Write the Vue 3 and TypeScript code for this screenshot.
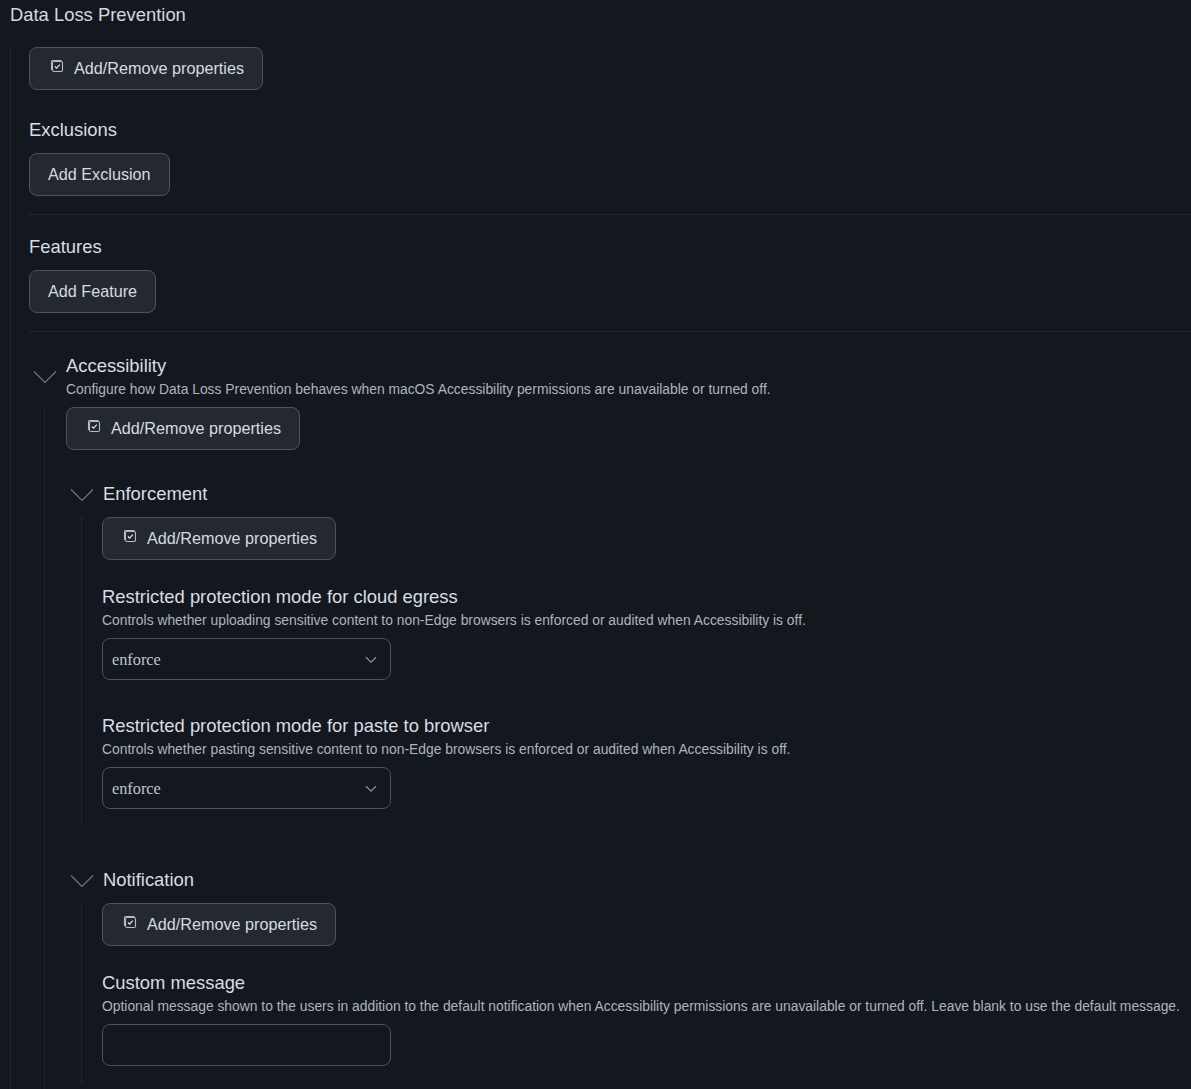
<script setup lang="ts">
interface Field {
  label: string
  help: string
  value: string
}

const enforcement: Field[] = [
  {
    label: 'Restricted protection mode for cloud egress',
    help: 'Controls whether uploading sensitive content to non-Edge browsers is enforced or audited when Accessibility is off.',
    value: 'enforce',
  },
  {
    label: 'Restricted protection mode for paste to browser',
    help: 'Controls whether pasting sensitive content to non-Edge browsers is enforced or audited when Accessibility is off.',
    value: 'enforce',
  },
]
</script>

<template>
  <main class="page">
    <h1 class="title">Data Loss Prevention</h1>
    <div class="root-body">
      <button class="btn" type="button">
        <svg class="prop-icon" viewBox="0 0 14 14" fill="none" stroke="currentColor" aria-hidden="true">
          <path d="M1.5 11V2.5c0-.6.4-1 1-1h9" stroke-width="1.1" />
          <rect x="2.5" y="2.5" width="10" height="10" rx="1.5" stroke-width="1.1" />
          <path d="M5 7.5l1.6 1.6L9.8 5.6" stroke-width="1.1" stroke="#e6ebef" />
        </svg>
        <span>Add/Remove properties</span>
      </button>

      <h2 class="section-title exclusions">Exclusions</h2>
      <button class="btn plain" type="button">Add Exclusion</button>
      <hr class="rule" />

      <h2 class="section-title">Features</h2>
      <button class="btn plain" type="button">Add Feature</button>
      <hr class="rule" />

      <section class="group accessibility">
        <svg class="chevron" viewBox="0 0 24 14" fill="none" stroke="currentColor" aria-hidden="true">
          <path d="M1 1.5l11 11 11-11" stroke-width="1.2" />
        </svg>
        <div class="group-head">
          <h2 class="section-title flush">Accessibility</h2>
          <p class="help">Configure how Data Loss Prevention behaves when macOS Accessibility permissions are unavailable or turned off.</p>
        </div>
        <div class="group-body">
          <button class="btn" type="button">
            <svg class="prop-icon" viewBox="0 0 14 14" fill="none" stroke="currentColor" aria-hidden="true">
              <path d="M1.5 11V2.5c0-.6.4-1 1-1h9" stroke-width="1.1" />
              <rect x="2.5" y="2.5" width="10" height="10" rx="1.5" stroke-width="1.1" />
              <path d="M5 7.5l1.6 1.6L9.8 5.6" stroke-width="1.1" stroke="#e6ebef" />
            </svg>
            <span>Add/Remove properties</span>
          </button>

          <section class="group sub enforcement">
            <svg class="chevron" viewBox="0 0 24 14" fill="none" stroke="currentColor" aria-hidden="true">
              <path d="M1 1.5l11 11 11-11" stroke-width="1.2" />
            </svg>
            <div class="group-head">
              <h2 class="section-title flush">Enforcement</h2>
            </div>
            <div class="group-body inner">
              <button class="btn" type="button">
                <svg class="prop-icon" viewBox="0 0 14 14" fill="none" stroke="currentColor" aria-hidden="true">
                  <path d="M1.5 11V2.5c0-.6.4-1 1-1h9" stroke-width="1.1" />
                  <rect x="2.5" y="2.5" width="10" height="10" rx="1.5" stroke-width="1.1" />
                  <path d="M5 7.5l1.6 1.6L9.8 5.6" stroke-width="1.1" stroke="#e6ebef" />
                </svg>
                <span>Add/Remove properties</span>
              </button>
              <div v-for="f in enforcement" :key="f.label" class="field">
                <h3 class="section-title flush">{{ f.label }}</h3>
                <p class="help">{{ f.help }}</p>
                <div class="select">
                  <span>{{ f.value }}</span>
                  <svg class="select-caret" viewBox="0 0 12 8" fill="none" stroke="currentColor" aria-hidden="true">
                    <path d="M1 1.2l5 5 5-5" stroke-width="1.3" />
                  </svg>
                </div>
              </div>
            </div>
          </section>

          <section class="group sub notification">
            <svg class="chevron" viewBox="0 0 24 14" fill="none" stroke="currentColor" aria-hidden="true">
              <path d="M1 1.5l11 11 11-11" stroke-width="1.2" />
            </svg>
            <div class="group-head">
              <h2 class="section-title flush">Notification</h2>
            </div>
            <div class="group-body inner">
              <button class="btn" type="button">
                <svg class="prop-icon" viewBox="0 0 14 14" fill="none" stroke="currentColor" aria-hidden="true">
                  <path d="M1.5 11V2.5c0-.6.4-1 1-1h9" stroke-width="1.1" />
                  <rect x="2.5" y="2.5" width="10" height="10" rx="1.5" stroke-width="1.1" />
                  <path d="M5 7.5l1.6 1.6L9.8 5.6" stroke-width="1.1" stroke="#e6ebef" />
                </svg>
                <span>Add/Remove properties</span>
              </button>
              <div class="field">
                <h3 class="section-title flush">Custom message</h3>
                <p class="help nowrap">Optional message shown to the users in addition to the default notification when Accessibility permissions are unavailable or turned off. Leave blank to use the default message.</p>
                <div class="select empty"></div>
              </div>
            </div>
          </section>
        </div>
      </section>
    </div>
  </main>
</template>

<style scoped>
.page {
  box-sizing: border-box;
  height: 1089px;
  overflow: hidden;
  background: #13181f;
  color: #e6edf3;
  font-family: "Liberation Sans", Arial, sans-serif;
}
.title {
  margin: 0;
  padding: 3px 0 0 10px;
  height: 47px;
  box-sizing: border-box;
  font-size: 18.4px;
  line-height: 23px;
  font-weight: 400;
  color: #d3d8dd;
}
.root-body {
  margin-left: 10px;
  padding-left: 18px;
  padding-bottom: 60px;
  border-left: 1px solid #21262d;
}
.btn {
  display: flex;
  align-items: center;
  gap: 10px;
  box-sizing: border-box;
  height: 43px;
  padding: 0 18px 2px;
  border: 1px solid #4d535b;
  border-radius: 8px;
  background: #24292f;
  color: #d5dbe0;
  font: 400 16.2px/20px "Liberation Sans", Arial, sans-serif;
}
.prop-icon {
  width: 14px;
  height: 14px;
  margin: -3px 0 0 2px;
  color: #b5bbc1;
}
.section-title {
  margin: 0;
  padding-bottom: 2px;
  font-size: 18.4px;
  line-height: 21px;
  font-weight: 400;
  color: #d8dde2;
}
.exclusions { margin-top: 29px; }
.section-title:not(.flush) { padding-bottom: 13px; }
.rule {
  height: 1px;
  margin: 18px 0 21px;
  border: 0;
  background: #21262d;
}
.group {
  display: grid;
  grid-template-columns: 37px 1fr;
  color: #9da3a9;
}
.accessibility { margin-top: 23px; }
.chevron {
  width: 24px;
  height: 14px;
  margin: 15px 0 0 4px;
  color: #6e747b;
}
.group-head {
  min-width: 0;
  color: #d8dde2;
}
.group-body {
  grid-column: 1 / 3;
  margin-left: 15px;
  padding-left: 21px;
  padding-bottom: 60px;
  border-left: 1px solid #21262d;
  margin-top: 9px;
}
.group-body.inner {
  margin-top: 11px;
  margin-left: 15px;
  padding-left: 20px;
  padding-bottom: 17px;
}
.help {
  margin: 2px 0 0;
  font-size: 13.85px;
  line-height: 18px;
  color: #aeb4ba;
}
.nowrap { white-space: nowrap; }
.sub {
  grid-template-columns: 37px 1fr;
  margin-top: 33px;
}
.sub .chevron { margin: 5px 0 0 4px; }
.notification { margin-top: 43px; }
.field { margin-top: 26px; }
.field + .field { margin-top: 35px; }
.field .help { margin-bottom: 9px; }
.select {
  display: flex;
  align-items: center;
  justify-content: space-between;
  box-sizing: border-box;
  width: 289px;
  height: 42px;
  padding: 1px 13px 0 9px;
  border: 1px solid #4d535b;
  border-radius: 8px;
  background: #13181f;
  color: #bfc5ca;
  font: 400 16.3px/20px "Liberation Serif", "Times New Roman", serif;
}
.select-caret {
  width: 12px;
  height: 8px;
  color: #8b9198;
}
</style>

<style>
html, body { background: #13181f; }
</style>
